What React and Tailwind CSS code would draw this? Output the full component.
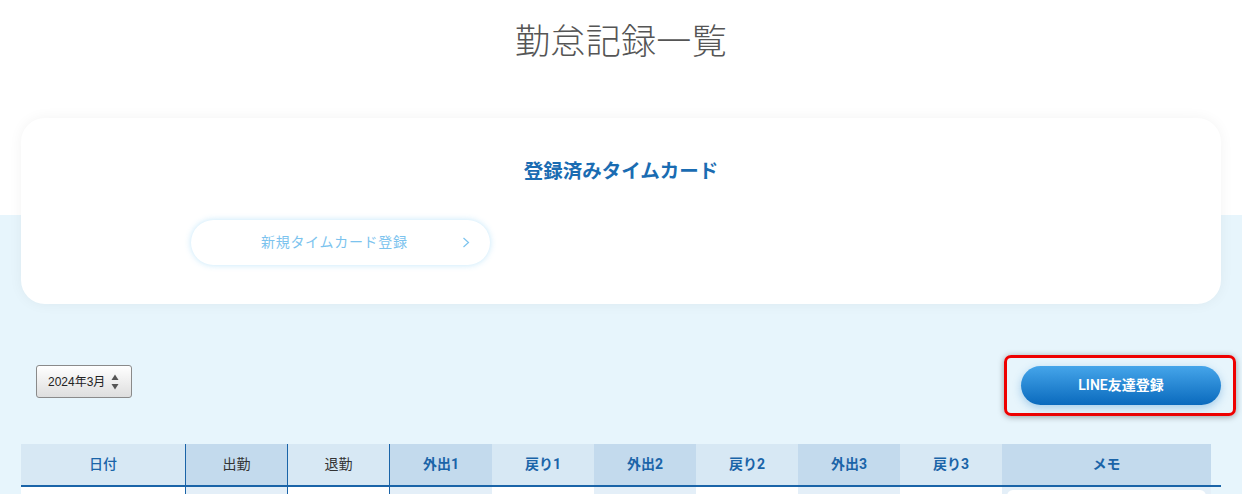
export default function App() {
  const cols = [
    { label: "日付", w: "w-[164px]", bg: "bg-[#d7e8f4]", text: "text-[#1a64a8] font-medium", body: "bg-white" },
    { label: "出勤", w: "w-[102px]", bg: "bg-[#c3daed]", text: "text-[#333] font-normal", body: "bg-[#e4eff8]", border: "border-l border-[#1a64a8]" },
    { label: "退勤", w: "w-[103px]", bg: "bg-[#d7e8f4]", text: "text-[#333] font-normal", body: "bg-white", border: "border-l border-r border-[#1a64a8]" },
    { label: "外出1", w: "w-[102px]", bg: "bg-[#c3daed]", text: "text-[#1a64a8] font-bold", body: "bg-[#e4eff8]" },
    { label: "戻り1", w: "w-[102px]", bg: "bg-[#d7e8f4]", text: "text-[#1a64a8] font-bold", body: "bg-white" },
    { label: "外出2", w: "w-[102px]", bg: "bg-[#c3daed]", text: "text-[#1a64a8] font-bold", body: "bg-[#e4eff8]" },
    { label: "戻り2", w: "w-[102px]", bg: "bg-[#d7e8f4]", text: "text-[#1a64a8] font-bold", body: "bg-white" },
    { label: "外出3", w: "w-[102px]", bg: "bg-[#c3daed]", text: "text-[#1a64a8] font-bold", body: "bg-[#e4eff8]" },
    { label: "戻り3", w: "w-[102px]", bg: "bg-[#d7e8f4]", text: "text-[#1a64a8] font-bold", body: "bg-white" },
    { label: "メモ", w: "w-[209px]", bg: "bg-[#c3daed]", text: "text-[#1a64a8] font-bold", body: "bg-[#e4eff8]", memo: true },
  ];
  return (
    <div
      className="min-h-[494px] w-full bg-[linear-gradient(to_bottom,#ffffff_215px,#e7f5fc_215px)] font-['Roboto','Noto_Sans_CJK_JP',sans-serif]"
    >
      <h1 className="pt-[25px] text-center text-[35px] leading-[35px] font-light text-[#555] tracking-[0.01em]">
        勤怠記録一覧
      </h1>

      <div className="mx-[21px] mt-[58px] h-[186px] rounded-[24px] bg-white shadow-[0_0_14px_rgba(0,0,0,0.05)] pt-[44px]">
        <h2 className="text-center text-[19.5px] leading-[20px] font-bold text-[#1a6cb2]">
          登録済みタイムカード
        </h2>
        <div className="mt-[38px] ml-[170px] flex h-[45px] w-[299px] items-center rounded-full bg-white shadow-[0_0_6px_rgba(120,200,245,0.45)] pl-[70px] pr-[20px]">
          <span className="text-[14px] tracking-[0.05em] text-[#7cc3ee]">新規タイムカード登録</span>
          <svg className="ml-auto" width="8" height="11" viewBox="0 0 8 11">
            <polyline points="1.5,1 6.5,5.5 1.5,10" fill="none" stroke="#7cc3ee" strokeWidth="1.2" />
          </svg>
        </div>
      </div>

      <div className="mx-[21px] mt-[51px] flex items-start justify-between">
        <div className="ml-[15px] mt-[10px] flex h-[33px] w-[96px] items-center rounded-[3px] border border-[#8a8a8a] bg-[linear-gradient(to_bottom,#ffffff,#dedede)] pl-[11px] pr-[12px] font-['Liberation_Sans','Noto_Sans_CJK_JP',sans-serif]">
          <span className="text-[12px] text-[#222]">2024年3月</span>
          <svg className="ml-auto" width="8" height="16" viewBox="0 0 8 16">
            <path d="M4 0.5 L7.5 6 L0.5 6 Z" fill="#555" />
            <path d="M4 15.5 L7.5 10 L0.5 10 Z" fill="#555" />
          </svg>
        </div>
        <div className="-mr-[15px] rounded-[7px] border-[3px] border-[#ee0000] pl-[14px] pr-[12px] py-[8px] shadow-[0_1px_6px_rgba(0,0,0,0.35)]">
          <button className="flex h-[39px] w-[200px] items-center justify-center rounded-full bg-[linear-gradient(to_bottom,#45a5ea,#0a6abd)] text-[14px] font-semibold text-white shadow-[0_3px_8px_rgba(40,130,200,0.35)]">
            LINE友達登録
          </button>
        </div>
      </div>

      <div className="mx-[21px] mt-[28px] w-[1200px]">
        <div className="flex border-b-2 border-[#1a64a8]">
          {cols.map((c) => (
            <div
              key={c.label}
              className={`flex h-[41px] items-center justify-center text-[14px] ${c.w} ${c.bg} ${c.text} ${c.border || ""}`}
            >
              {c.label}
            </div>
          ))}
        </div>
        <div className="flex">
          {cols.map((c) => (
            <div key={c.label} className={`h-[50px] ${c.w} ${c.body} ${c.border || ""} ${c.memo ? "px-[5px] pt-[3px]" : ""}`}>
              {c.memo && <div className="h-[40px] w-full rounded-[6px] bg-white" />}
            </div>
          ))}
        </div>
      </div>
    </div>
  );
}
